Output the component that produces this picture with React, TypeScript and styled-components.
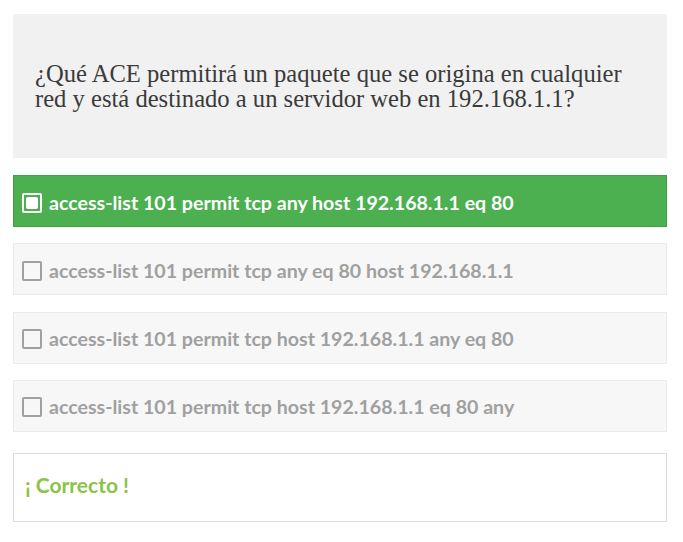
import React from "react";
import styled, { createGlobalStyle } from "styled-components";

const Global = createGlobalStyle`
  html, body { margin: 0; padding: 0; background: #ffffff; }
  body { font-family: Lato, "Open Sans", sans-serif; }
`;

const Page = styled.div`
  padding: 14px 16px 0 13px;
  display: flex;
  flex-direction: column;
`;

const Question = styled.div`
  background: #f1f1f1;
  height: 144px;
  box-sizing: border-box;
  padding: 0 22px;
  display: flex;
  align-items: center;
  font-family: "Liberation Serif", "DejaVu Serif", serif;
  font-size: 24.6px;
  line-height: 25px;
  color: #3a3a3a;
`;

const Options = styled.div`
  display: flex;
  flex-direction: column;
  gap: 16.3px;
  margin-top: 17px;
`;

const Option = styled.div<{ $selected?: boolean }>`
  height: 52px;
  box-sizing: border-box;
  display: flex;
  align-items: center;
  gap: 7px;
  padding: 2px 0 0 8px;
  background: ${(p) => (p.$selected ? "#4caf50" : "#f7f7f7")};
  border: 1px solid ${(p) => (p.$selected ? "#3f9f44" : "#ebebeb")};
  color: ${(p) => (p.$selected ? "#ffffff" : "#a0a0a0")};
  font-family: Lato, sans-serif;
  font-weight: 700;
  font-size: 19.6px;
`;

const Box = styled.span<{ $selected?: boolean }>`
  width: 20px;
  height: 20px;
  box-sizing: border-box;
  border: 2px solid ${(p) => (p.$selected ? "#ffffff" : "#a0a0a0")};
  border-radius: 2px;
  display: flex;
  align-items: center;
  justify-content: center;
  margin-top: 1px;
  flex: none;
`;

const Fill = styled.span`
  width: 12px;
  height: 12px;
  border-radius: 2px;
  background: #ffffff;
`;

const Feedback = styled.div`
  margin-top: 21px;
  height: 69px;
  box-sizing: border-box;
  border: 1px solid #dcdcdc;
  display: flex;
  align-items: center;
  padding: 0 0 5px 11px;
  font-family: Lato, sans-serif;
  font-weight: 700;
  font-size: 21px;
  color: #8bc34a;
`;

const options = [
  "access-list 101 permit tcp any host 192.168.1.1 eq 80",
  "access-list 101 permit tcp any eq 80 host 192.168.1.1",
  "access-list 101 permit tcp host 192.168.1.1 any eq 80",
  "access-list 101 permit tcp host 192.168.1.1 eq 80 any",
];

export default function App() {
  return (
    <>
      <Global />
      <Page>
        <Question>
          ¿Qué ACE permitirá un paquete que se origina en cualquier red y está destinado a un servidor web en 192.168.1.1?
        </Question>
        <Options>
          {options.map((o, i) => (
            <Option key={o} $selected={i === 0}>
              <Box $selected={i === 0}>{i === 0 && <Fill />}</Box>
              <span>{o}</span>
            </Option>
          ))}
        </Options>
        <Feedback>¡ Correcto !</Feedback>
      </Page>
    </>
  );
}
